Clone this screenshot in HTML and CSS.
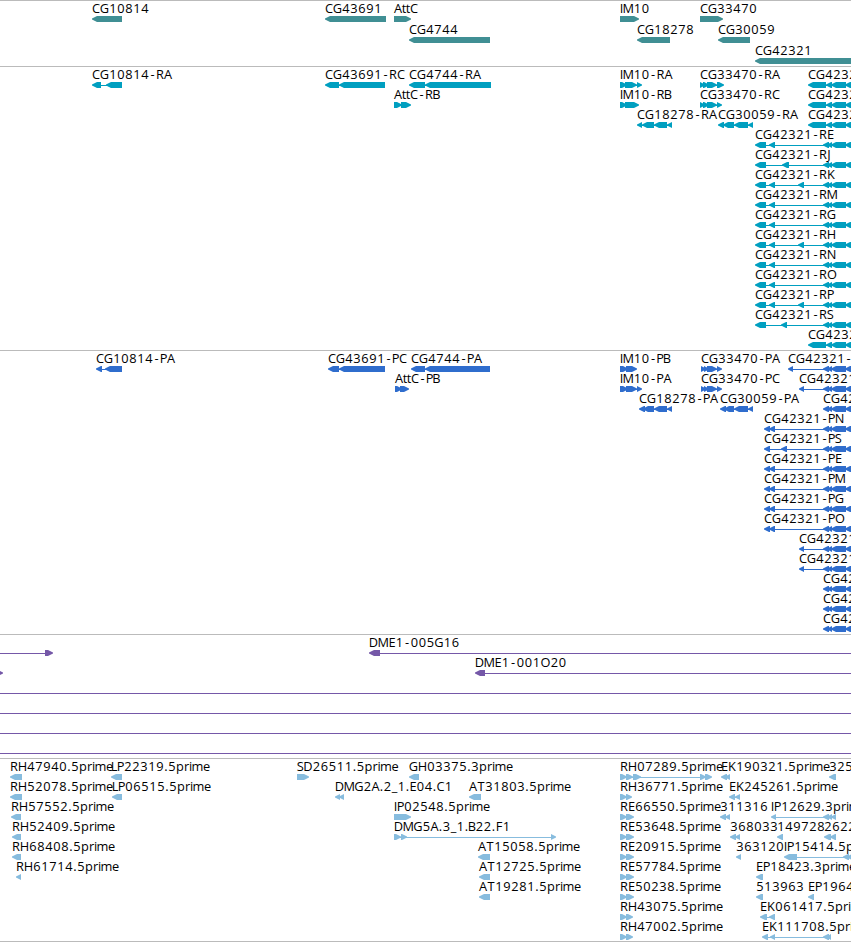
FILE: index.html
```html
<!DOCTYPE html>
<html lang="en">
<head>
  <meta charset="UTF-8" />
  <meta name="viewport" content="width=device-width, initial-scale=1" />
  <title>Genome Browser</title>
  <link rel="stylesheet" href="styles.css">
</head>
<body>

<div class="browser">
  <div class="track genes" id="genes"></div>
  <div class="track transcripts" id="transcripts"></div>
  <div class="track proteins" id="proteins"></div>
  <div class="track clones" id="clones"></div>
  <div class="track ests" id="ests"></div>
</div>

<script src="tracks.js"></script>

</body>
</html>
```

FILE: styles.css
```css
body {
  margin: 0;
  background: white;
}
.browser {
  width: 100%;
  overflow: hidden;
  border-bottom: 1px solid #bbb;
}
.track {
  border-top: 1px solid #bbb;
  padding-bottom: 3px;
}
.row {
  display: block;
  width: 100%;
  height: 20px;
  overflow: visible;
}
.row text {
  font-family: "Open Sans", "DejaVu Sans", sans-serif;
  font-size: 12.8px;
  fill: black;
  text-anchor: middle;
}
.row rect {
  shape-rendering: crispEdges;
}
.genes {
  fill: #408f94;
  padding-bottom: 2px;
}
.genes .row {
  height: 21px;
}
.transcripts {
  fill: #009fc0;
}
.proteins {
  fill: #2f6dcd;
}
.clones {
  fill: #7558a8;
}
.ests {
  fill: #87bcde;
  padding-bottom: 2px;
}
```

FILE: tracks.js
```js
// feature: [label, strand, [start, end], [start, end], ...]
// the label starts where the first block starts
const tail = [[823, 829], [827, 832], [831, 846], [845, 856]];
const wideTail = [[808, 826], [826, 832], [831, 846], [845, 856]];

function cg(suffix, ...blocks) {
  return ['CG42321' + suffix, '-', ...blocks, ...tail];
}

const tracks = {
  genes: [
    [
      ['CG10814', '-', [92, 122]],
      ['CG43691', '-', [325, 386]],
      ['AttC', '+', [394, 411]],
      ['IM10', '+', [620, 639]],
      ['CG33470', '+', [700, 723]]
    ],
    [
      ['CG4744', '-', [409, 490]],
      ['CG18278', '-', [637, 670]],
      ['CG30059', '-', [718, 750]]
    ],
    [
      ['CG42321', '-', [755, 860]]
    ]
  ],
  transcripts: [
    [
      ['CG10814-RA', '-', [92, 101], [106, 122]],
      ['CG43691-RC', '-', [325, 339], [339, 385]],
      ['CG4744-RA', '-', [409, 425], [425, 491]],
      ['IM10-RA', '+', [620, 627], [625, 637], [637, 642]],
      ['CG33470-RA', '+', [700, 705], [703, 709], [707, 717], [717, 724]],
      ['CG42321', '-', ...wideTail]
    ],
    [
      ['AttC-RB', '+', [394, 402], [401, 411]],
      ['IM10-RB', '+', [620, 627], [625, 639]],
      ['CG33470-RC', '+', [700, 705], [703, 709], [707, 717], [717, 722]],
      ['CG42321', '-', ...wideTail]
    ],
    [
      ['CG18278-RA', '-', [637, 642], [642, 654], [654, 667], [667, 672]],
      ['CG30059-RA', '-', [718, 724], [723, 734], [734, 748], [748, 753]],
      ['CG42321', '-', ...wideTail]
    ],
    [cg('-RE', [755, 766], [769, 775])],
    [cg('-RJ', [755, 766], [782, 789])],
    [cg('-RK', [755, 766], [769, 775], [798, 804])],
    [cg('-RM', [755, 766], [769, 775])],
    [cg('-RG', [755, 766], [769, 775])],
    [cg('-RH', [755, 766], [769, 775], [798, 804])],
    [cg('-RN', [755, 766], [769, 775])],
    [cg('-RO', [755, 766], [769, 775])],
    [cg('-RP', [755, 766], [769, 775], [798, 804])],
    [cg('-RS', [755, 766], [781, 787])],
    [['CG42321', '-', ...wideTail]]
  ],
  proteins: [
    [
      ['CG10814-PA', '-', [96, 102], [105, 122]],
      ['CG43691-PC', '-', [328, 339], [339, 385]],
      ['CG4744-PA', '-', [411, 425], [425, 490]],
      ['IM10-PB', '+', [620, 628], [626, 637]],
      ['CG33470-PA', '+', [701, 706], [704, 709], [707, 717], [717, 722]],
      cg('-', [788, 793])
    ],
    [
      ['AttC-PB', '+', [395, 402], [400, 409]],
      ['IM10-PA', '+', [620, 628], [626, 637], [637, 642]],
      ['CG33470-PC', '+', [701, 706], [704, 709], [707, 717], [717, 722]],
      cg('', [799, 804])
    ],
    [
      ['CG18278-PA', '-', [639, 645], [643, 654], [654, 667], [667, 672]],
      ['CG30059-PA', '-', [720, 726], [724, 734], [734, 748], [748, 753]],
      cg('')
    ],
    [cg('-PN', [764, 770], [769, 775])],
    [cg('-PS', [764, 770], [781, 787])],
    [cg('-PE', [764, 770], [769, 775])],
    [cg('-PM', [764, 770], [769, 775])],
    [cg('-PG', [764, 770], [769, 775])],
    [cg('-PO', [764, 770], [769, 775])],
    [cg('', [799, 804])],
    [cg('', [799, 804])],
    [cg('')],
    [cg('')],
    [cg('')]
  ],
  clones: [
    [
      ['', '+', [-20, -10], [45, 53]],
      ['DME1-005G16', '-', [369, 380], [900, 910]]
    ],
    [
      ['', '+', [-8, 3]],
      ['DME1-001O20', '-', [475, 485], [900, 910]]
    ],
    [['', '+', [-20, -10], [900, 910]]],
    [['', '+', [-20, -10], [900, 910]]],
    [['', '+', [-20, -10], [900, 910]]],
    [['', '+', [-20, -10], [900, 910]]]
  ],
  ests: [
    [
      ['RH47940.5prime', '-', [10, 22]],
      ['LP22319.5prime', '-', [111, 122]],
      ['SD26511.5prime', '+', [297, 309]],
      ['GH03375.3prime', '-', [409, 419]],
      ['RH07289.5prime', '+', [620, 627], [626, 633], [633, 641], [700, 706], [705, 712]],
      ['EK190321.5prime', '-', [721, 727], [725, 730]],
      ['325', '-', [829, 836]]
    ],
    [
      ['RH52078.5prime', '-', [10, 22]],
      ['LP06515.5prime', '-', [112, 122]],
      ['DMG2A.2_1.E04.C1', '-', [335, 340], [339, 344]],
      ['AT31803.5prime', '-', [469, 481]],
      ['RH36771.5prime', '+', [620, 627], [626, 632]],
      ['EK245261.5prime', '-', [729, 735], [735, 740]]
    ],
    [
      ['RH57552.5prime', '-', [11, 21]],
      ['IP02548.5prime', '+', [394, 411]],
      ['RE66550.5prime', '+', [620, 627], [626, 634]],
      ['311316', '-', [720, 726], [725, 730]],
      ['IP12629.3prime', '-', [771, 776], [823, 829], [827, 832], [831, 836]]
    ],
    [
      ['RH52409.5prime', '-', [12, 21]],
      ['DMG5A.3_1.B22.F1', '+', [394, 401], [401, 407], [551, 556]],
      ['RE53648.5prime', '+', [620, 627], [626, 634]],
      ['368033', '-', [730, 736], [735, 740]],
      ['149728', '-', [777, 783]],
      ['2622', '-', [824, 831], [830, 836]]
    ],
    [
      ['RH68408.5prime', '-', [12, 21]],
      ['AT15058.5prime', '-', [478, 490]],
      ['RE20915.5prime', '+', [620, 627], [626, 634]],
      ['363120', '-', [736, 741]],
      ['IP15414.5prime', '-', [784, 797], [843, 849], [847, 854]]
    ],
    [
      ['RH61714.5prime', '-', [16, 21]],
      ['AT12725.5prime', '-', [479, 490]],
      ['RE57784.5prime', '+', [620, 627], [626, 634]],
      ['EP18423.3prime', '-', [756, 763]]
    ],
    [
      ['AT19281.5prime', '-', [479, 490]],
      ['RE50238.5prime', '+', [620, 627], [626, 634]],
      ['513963', '-', [756, 763]],
      ['EP1964', '-', [808, 814]]
    ],
    [
      ['RH43075.5prime', '+', [620, 627], [626, 633]],
      ['EK061417.5prime', '-', [760, 767], [769, 775]]
    ],
    [
      ['RH47002.5prime', '+', [620, 627], [626, 633]],
      ['EK111708.5prime', '-', [762, 768], [770, 775], [823, 829], [827, 831]]
    ]
  ]
};

// cell width of each character, digits are 8 wide
const advance = {
  A: 8, B: 7, C: 8, D: 9, E: 7, F: 7, G: 9, H: 9, I: 3, J: 4, K: 8, L: 6, M: 10.5,
  N: 9, O: 10, P: 7, R: 8, S: 6.5, T: 8, t: 4, p: 8, r: 5, i: 3, m: 11, e: 7,
  '.': 4, '-': 7, '_': 6
};

// every character is centred in its own cell
function drawLabel(label, x) {
  const xs = [];
  for (const ch of label) {
    const w = advance[ch] || 8;
    xs.push(x + w / 2);
    x += w;
  }
  return `<text x="${xs.join(' ')}" y="12">${label}</text>`;
}

function drawBlock(start, end, strand) {
  const head = Math.min(5, end - start);
  const tip = strand === '-' ? start : end;
  const neck = strand === '-' ? start + head : end - head;
  const back = strand === '-' ? end : start;
  return `<polygon points="${tip},17.5 ${neck},15 ${back},15 ${back},21 ${neck},21 ${tip},18.5" />`;
}

function drawFeature([label, strand, ...blocks]) {
  const start = blocks[0][0];
  const end = blocks[blocks.length - 1][1];
  let out = '';
  if (blocks.length > 1) {
    out += `<rect x="${start + 1}" y="18" width="${end - start - 2}" height="1" />`;
  }
  blocks.forEach(([from, to]) => {
    out += drawBlock(from, to, strand);
  });
  if (label) out += drawLabel(label, start);
  return out;
}

for (const id in tracks) {
  document.getElementById(id).innerHTML = tracks[id]
    .map(row => `<svg class="row">${row.map(drawFeature).join('')}</svg>`)
    .join('');
}
```
